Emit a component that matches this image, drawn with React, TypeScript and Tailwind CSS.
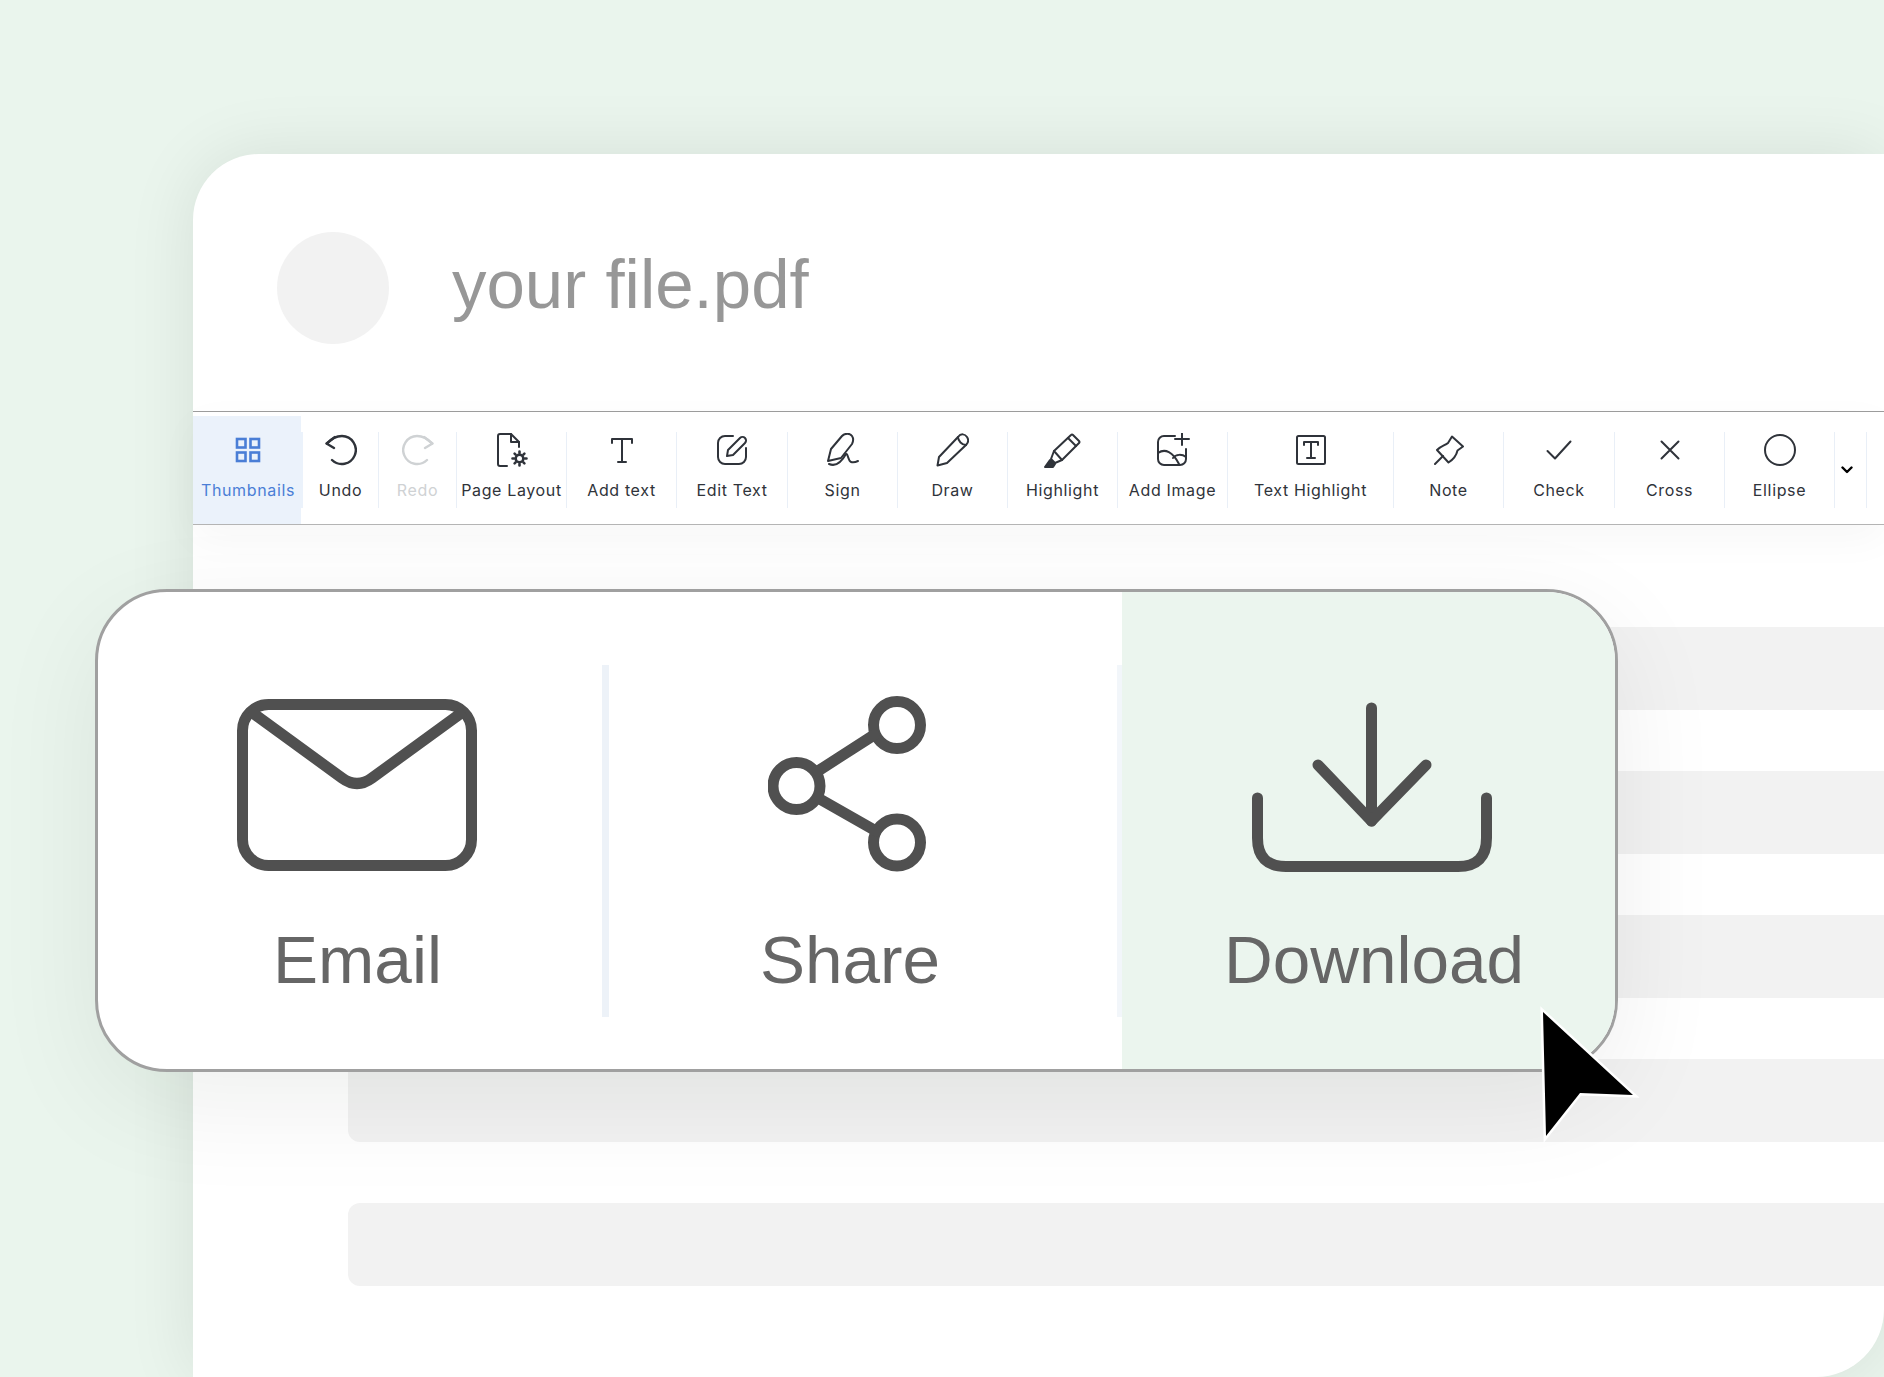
import type { ReactNode } from 'react'

type ToolItem = {
    label: string
    width: string
    icon: ReactNode
    muted?: boolean
    active?: boolean
}

const Stroke = ({ w, h, sw = 2, children }: { w: number; h: number; sw?: number; children: ReactNode }) => (
    <svg
        width={w}
        height={h}
        viewBox={`0 0 ${w} ${h}`}
        fill="none"
        stroke="currentColor"
        strokeWidth={sw}
        strokeLinecap="round"
        strokeLinejoin="round"
    >
        {children}
    </svg>
)

const tools: ToolItem[] = [
    {
        label: 'Undo',
        width: 'w-[76px]',
        icon: (
            <Stroke w={32} h={32} sw={2.4}>
                <path d="M2 9.5C6 5 11 2 17 2A14 14 0 1 1 7 26" />
                <path d="M10 3L1.5 9.5L9 14" />
            </Stroke>
        ),
    },
    {
        label: 'Redo',
        width: 'w-[78px]',
        muted: true,
        icon: (
            <Stroke w={32} h={32} sw={2.4}>
                <path d="M30 9.5C26 5 21 2 15 2A14 14 0 1 0 25 26" />
                <path d="M22 3L30.5 9.5L23 14" />
            </Stroke>
        ),
    },
    {
        label: 'Page Layout',
        width: 'w-[110px]',
        icon: (
            <Stroke w={32} h={34}>
                <path d="M11 33H4a2 2 0 0 1-2-2V3a2 2 0 0 1 2-2H15L23 9V14" />
                <path d="M15 1V9H23" />
                <circle cx="23.5" cy="25.5" r="3.8" strokeWidth="2.6" />
                <path d="M23.5 18.5V20M23.5 31V32.5M16.5 25.5H18M29 25.5H30.5M18.6 20.6L19.6 21.6M27.4 29.4L28.4 30.4M28.4 20.6L27.4 21.6M19.6 29.4L18.6 30.4" strokeWidth="2.6" />
            </Stroke>
        ),
    },
    {
        label: 'Add text',
        width: 'w-[110px]',
        icon: (
            <Stroke w={24} h={26}>
                <path d="M2 6V2H22V6" />
                <path d="M12 2V25" />
                <path d="M8 25H16" />
            </Stroke>
        ),
    },
    {
        label: 'Edit Text',
        width: 'w-[111px]',
        icon: (
            <Stroke w={32} h={32}>
                <path d="M17 2H9A7 7 0 0 0 2 9V23A7 7 0 0 0 9 30H23A7 7 0 0 0 30 23V14" />
                <path d="M11 22L12 16L24 4A3 3 0 0 1 29 9L17 21Z" />
            </Stroke>
        ),
    },
    {
        label: 'Sign',
        width: 'w-[110px]',
        icon: (
            <Stroke w={33} h={34}>
                <path d="M2 28L5 16L16 3C19 0 24 0 26 3C28 6 27 9 26 11L15 25L2 28Z" />
                <path d="M3 31C10 34 15 30 20 21C22 20 22 28 25 29C28 30 30 29 32 28" />
            </Stroke>
        ),
    },
    {
        label: 'Draw',
        width: 'w-[110px]',
        icon: (
            <Stroke w={33} h={34}>
                <path d="M1.5 32.5L3 24L22 4C25 0 29 1 31 4C33 7 32 10 30 12L11 30Z" />
                <path d="M22 4C22 8 26 12 30 12" />
            </Stroke>
        ),
    },
    {
        label: 'Highlight',
        width: 'w-[110px]',
        icon: (
            <Stroke w={37} h={35}>
                <path d="M10 18L27 2Q28 1 29 2L35 8Q36 9 35 10L18 27Z" />
                <path d="M24 5L32 13" />
                <path d="M10 18L7 26L11 30L18 27" />
                <path d="M6 27L11 31L9 34H1Z" fill="currentColor" />
            </Stroke>
        ),
    },
    {
        label: 'Add Image',
        width: 'w-[110px]',
        icon: (
            <Stroke w={34} h={34}>
                <path d="M19 3H8A6 6 0 0 0 2 9V26A6 6 0 0 0 8 32H24A6 6 0 0 0 30 26V16" />
                <path d="M2 20C9 15 17 19 23 31" />
                <path d="M17 25C20 21 26 21 30 24" />
                <path d="M19 6H33M26 0V12" />
            </Stroke>
        ),
    },
    {
        label: 'Text Highlight',
        width: 'w-[166px]',
        icon: (
            <Stroke w={32} h={32}>
                <rect x="2" y="2" width="28" height="28" rx="1.5" />
                <path d="M9 11V8H23V11" />
                <path d="M16 8V24" />
                <path d="M12 24H20" />
            </Stroke>
        ),
    },
    {
        label: 'Note',
        width: 'w-[110px]',
        icon: (
            <Stroke w={30} h={30}>
                <path d="M18 1.5L29 11.5L23.5 15.5C22.5 20 20 24 14.5 27.5L3 15C7 11 11 10.5 14 8Z" />
                <path d="M1 29L9 21" />
            </Stroke>
        ),
    },
    {
        label: 'Check',
        width: 'w-[111px]',
        icon: (
            <Stroke w={26} h={20}>
                <path d="M1.5 11L9 18.5L24.5 1.5" />
            </Stroke>
        ),
    },
    {
        label: 'Cross',
        width: 'w-[110px]',
        icon: (
            <Stroke w={20} h={20}>
                <path d="M1.5 1.5L18.5 18.5M18.5 1.5L1.5 18.5" />
            </Stroke>
        ),
    },
    {
        label: 'Ellipse',
        width: 'w-[110px]',
        icon: (
            <Stroke w={32} h={32}>
                <circle cx="16" cy="16" r="15" />
            </Stroke>
        ),
    },
]

function ToolCell({ tool }: { tool: ToolItem }) {
    return (
        <div
            className={`${tool.width} h-[76px] shrink-0 flex flex-col items-center border-r border-[#e9eff7] ${
                tool.muted ? 'text-[#cfd2d4]' : 'text-[#2f333a]'
            }`}
        >
            <div className="h-[36px] flex items-center justify-center">{tool.icon}</div>
            <span className="mt-[12px] text-[16px] leading-[20px] tracking-[0.04em] whitespace-nowrap font-['Inter',sans-serif]">
                {tool.label}
            </span>
        </div>
    )
}

function Toolbar() {
    return (
        <div className="relative z-10 h-[114px] shrink-0 pt-[4px] border-t border-b border-t-[#9c9c9c] border-b-[#b4b4b4] bg-white shadow-[0_14px_40px_rgba(0,0,0,0.035)] flex items-stretch">
            <div className="w-[108px] shrink-0 bg-[#ebf2fb] flex items-center">
                <div className="w-[110px] h-[76px] shrink-0 bg-[#ebf2fb] flex flex-col items-center text-[#4a7ed6]">
                    <div className="h-[36px] flex items-center justify-center">
                        <Stroke w={26} h={26} sw={2.6}>
                            <rect x="2" y="2" width="8.5" height="8.5" strokeLinejoin="miter" />
                            <rect x="15.5" y="2" width="8.5" height="8.5" strokeLinejoin="miter" />
                            <rect x="2" y="15.5" width="8.5" height="8.5" strokeLinejoin="miter" />
                            <rect x="15.5" y="15.5" width="8.5" height="8.5" strokeLinejoin="miter" />
                        </Stroke>
                    </div>
                    <span className="mt-[12px] text-[16px] leading-[20px] tracking-[0.04em] font-['Inter',sans-serif]">Thumbnails</span>
                </div>
            </div>
            <div className="ml-[2px] flex items-center">
                {tools.map(tool => (
                    <ToolCell key={tool.label} tool={tool} />
                ))}
                <div className="w-[32px] h-[76px] shrink-0 flex items-center justify-center border-r border-[#e9eff7] text-black pr-[8px]">
                    <svg width="12" height="8" viewBox="0 0 12 8" fill="none" stroke="currentColor" strokeWidth="2.4" strokeLinecap="round" strokeLinejoin="round">
                        <path d="M1.5 1.5L6 6L10.5 1.5" />
                    </svg>
                </div>
            </div>
        </div>
    )
}

function ActionLabel({ children, nudge = '' }: { children: ReactNode; nudge?: string }) {
    return <span className={`mt-[48px] text-[67.5px] leading-[80px] text-[#666666] whitespace-nowrap ${nudge}`}>{children}</span>
}

function ActionPopup() {
    return (
        <div className="absolute left-[95px] top-[589px] w-[1523px] h-[483px] z-20 flex overflow-hidden rounded-[72px] border-[3px] border-[#a0a0a0] bg-white shadow-[0_30px_110px_rgba(0,30,10,0.07)] font-['Liberation_Sans',Arial,sans-serif] text-[#505050]">
            <div className="w-[504px] shrink-0 pl-[15px] pt-[104px] flex flex-col items-center">
                <div className="h-[176px] flex items-center">
                    <svg className="mt-[2px] mr-[2px]" width="240" height="172" viewBox="0 0 240 172" fill="none" stroke="currentColor" strokeWidth="11" strokeLinejoin="round">
                        <rect x="5.5" y="5.5" width="229" height="161" rx="26" />
                        <path d="M13 12L105 79Q120 90 135 79L227 12" />
                    </svg>
                </div>
                <ActionLabel>Email</ActionLabel>
            </div>
            <div className="w-[7px] h-[352px] mt-[73px] shrink-0 bg-[#edf2f8]" />
            <div className="w-[508px] shrink-0 pr-[26px] pt-[104px] flex flex-col items-center">
                <div className="h-[176px] flex items-center">
                    <svg className="mr-[7px]" width="158" height="176" viewBox="0 0 158 176" fill="none" stroke="currentColor" strokeWidth="11" strokeLinecap="round">
                        <circle cx="129" cy="29" r="23.5" />
                        <circle cx="129" cy="146.5" r="23.5" />
                        <circle cx="28.5" cy="90" r="23.5" />
                        <path d="M50 75L106 39M50 102L108 135" />
                    </svg>
                </div>
                <ActionLabel>Share</ActionLabel>
            </div>
            <div className="w-[5px] h-[352px] mt-[73px] shrink-0 bg-[#f2f6fa]" />
            <div className="flex-1 min-w-0 bg-[#ebf5ee] pl-[6px] pt-[104px] flex flex-col items-center">
                <div className="h-[176px] flex items-center">
                    <svg width="240" height="175" viewBox="0 0 240 175" fill="none" stroke="currentColor" strokeWidth="11" strokeLinecap="round" strokeLinejoin="round">
                        <path d="M119.5 11V124" />
                        <path d="M66 68L119.5 124L174 68" />
                        <path d="M5.5 101V141Q5.5 169.5 34 169.5H206Q234.5 169.5 234.5 141V101" />
                    </svg>
                </div>
                <ActionLabel nudge="ml-[5px]">Download</ActionLabel>
            </div>
        </div>
    )
}

function PlaceholderRows() {
    return (
        <div className="flex-1 pl-[155px] pt-[102px] flex flex-col gap-[61px]">
            {[0, 1, 2, 3, 4].map(i => (
                <div key={i} className="h-[83px] shrink-0 rounded-l-[12px] bg-[#f2f2f2]" />
            ))}
        </div>
    )
}

export default function App() {
    return (
        <div className="relative w-[1884px] h-[1377px] overflow-hidden bg-[#eaf5ed] pl-[193px] pt-[154px]">
            <div className="h-full flex flex-col overflow-visible rounded-tl-[66px] rounded-br-[68px] bg-white shadow-[0_0_70px_rgba(0,0,0,0.09)]">
                <div className="h-[257px] shrink-0 pl-[84px] pt-[11px] flex items-center font-['Liberation_Sans',Arial,sans-serif]">
                    <div className="w-[112px] h-[112px] rounded-full bg-[#f2f2f2]" />
                    <span className="ml-[63px] mb-[6px] text-[69px] leading-[80px] text-[#979797] whitespace-nowrap">your file.pdf</span>
                </div>
                <Toolbar />
                <PlaceholderRows />
            </div>
            <ActionPopup />
            <svg className="absolute left-[1536px] top-[1003px] z-30" width="106" height="140" viewBox="0 0 106 140">
                <path d="M7 9L97 92L44 90L10 133Z" fill="#000000" stroke="#ffffff" strokeWidth="5" paintOrder="stroke" strokeLinejoin="miter" />
            </svg>
        </div>
    )
}
